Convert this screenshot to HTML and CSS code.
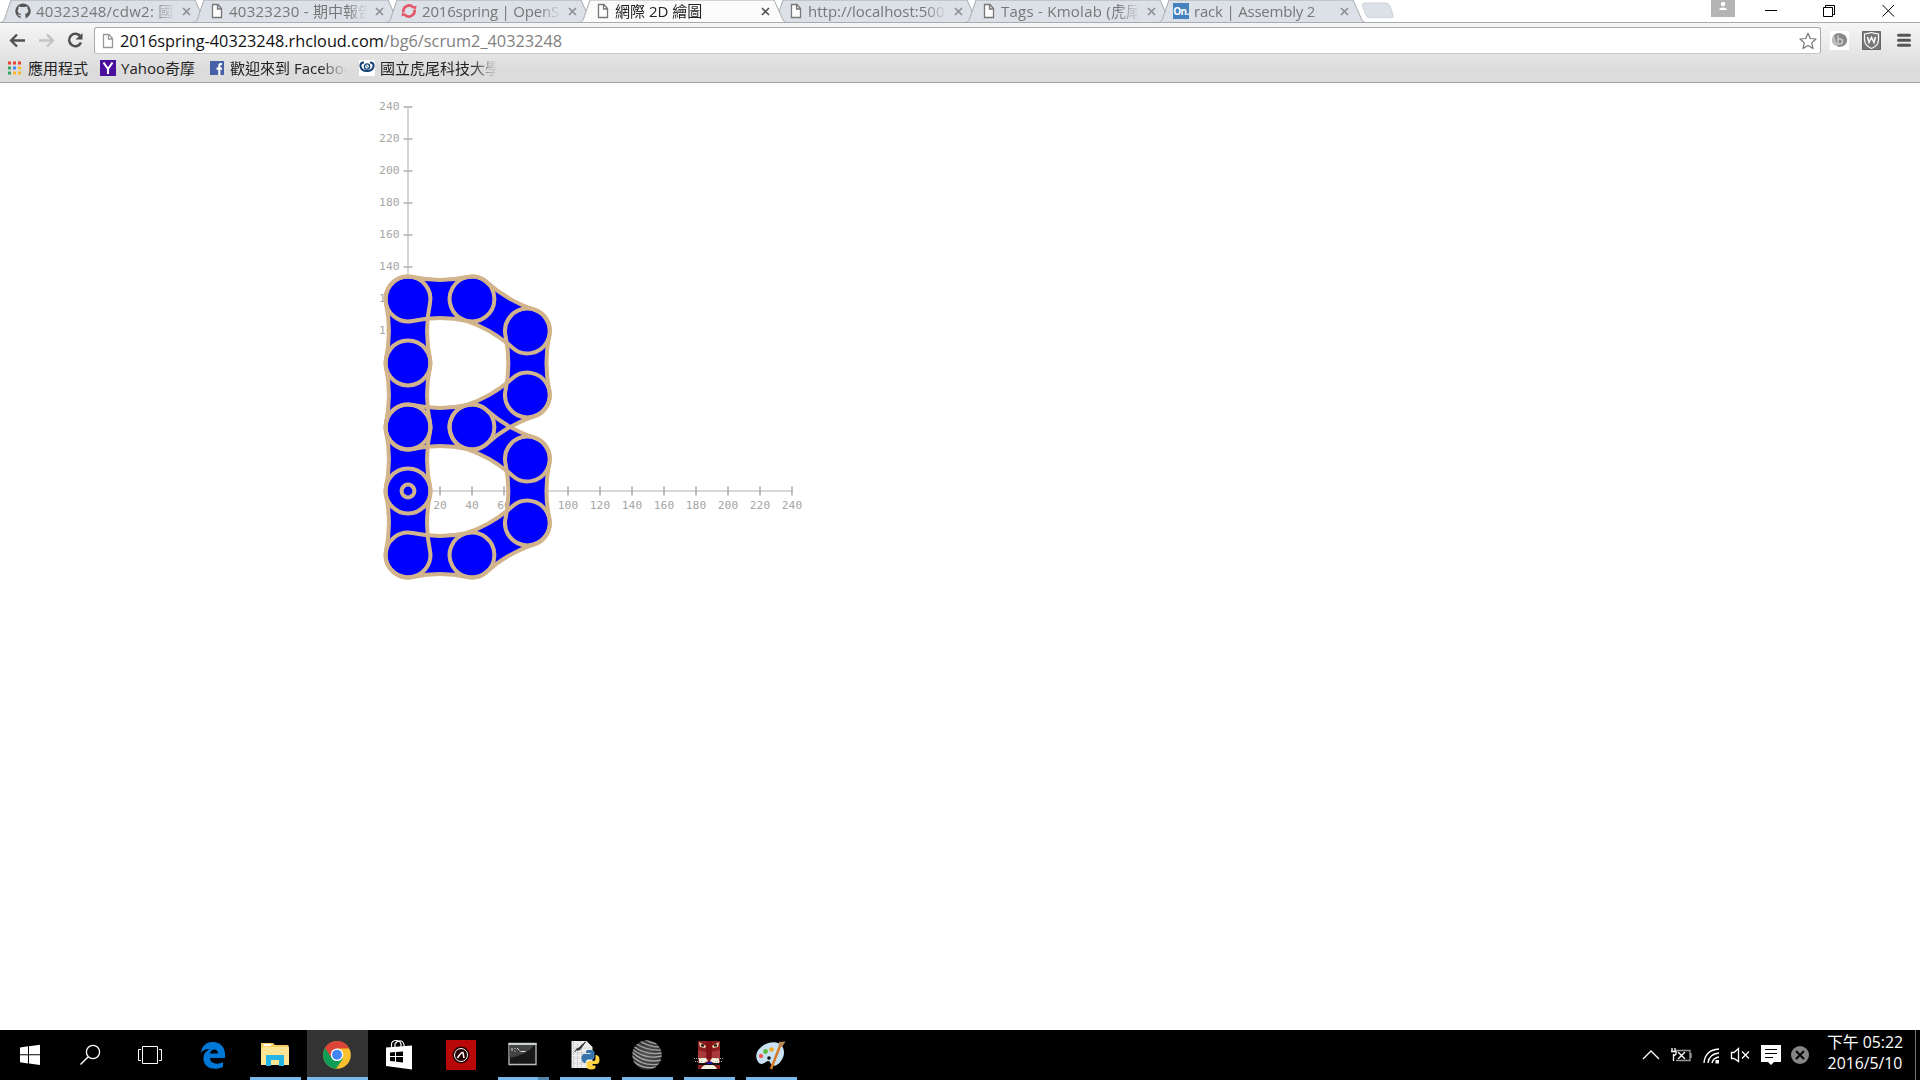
FILE: index.html
```html
<!DOCTYPE html>
<html lang="zh-Hant">
<head>
<meta charset="utf-8">
<title>網際 2D 繪圖</title>
<link rel="stylesheet" href="styles.css">
</head>
<body>
<svg class="defs" width="0" height="0">
  <defs>
    <symbol id="page" viewBox="0 0 12 16"><path d="M1.500 1.500H7L10.500 5.500V14.500H1.500ZM6.500 1.500V6H10.500" fill="#fff" stroke="currentColor" stroke-width="1.300"/></symbol>
    <symbol id="close" viewBox="0 0 9 9"><path d="M1 1L8 8M8 1L1 8" stroke="currentColor" stroke-width="1.700"/></symbol>
    <symbol id="tabshape" viewBox="0 0 211 23"><path d="M0 22.500C4 22 4.500 19 5.500 16L11 0H195L204 20C205 22 207 22.500 209 22.500Z"/></symbol>
    <path id="link" d="M4.580 -21.930A22.400 22.400 0 1 0 4.580 21.930A134 134 0 0 1 59.420 21.930A22.400 22.400 0 1 0 59.420 -21.930A134 134 0 0 1 4.580 -21.930Z"/>
    <g id="chain">
      <use href="#link" transform="translate(408 299)"/>
      <use href="#link" transform="translate(472 299) rotate(30)"/>
      <use href="#link" transform="translate(527.400 331) rotate(90)"/>
      <use href="#link" transform="translate(527.400 395) rotate(150)"/>
      <use href="#link" transform="translate(408 427)"/>
      <use href="#link" transform="translate(472 427) rotate(30)"/>
      <use href="#link" transform="translate(527.400 459) rotate(90)"/>
      <use href="#link" transform="translate(527.400 523) rotate(150)"/>
      <use href="#link" transform="translate(408 555)"/>
      <use href="#link" transform="translate(408 299) rotate(90)"/>
      <use href="#link" transform="translate(408 363) rotate(90)"/>
      <use href="#link" transform="translate(408 427) rotate(90)"/>
      <use href="#link" transform="translate(408 491) rotate(90)"/>
    </g>
  </defs>
</svg>

<header class="browser">
  <div class="tabstrip">
    <div class="tabs">
      <div class="tab"><svg class="shape"><use href="#tabshape"/></svg>
        <svg class="fav" viewBox="0 0 16 16"><path d="M8 0.500A7.600 7.600 0 0 0 5.500 15.300V12.800C3.500 13.200 3.200 12 2.300 11.300C3.500 11 3.800 12.300 5.500 11.900L6 10.900C2.500 10.400 2 7.500 3.500 5.400L3.600 3.200L5.700 4.100H10.300L12.400 3.200L12.500 5.400C14 7.500 13.500 10.400 10 10.900L10.500 12V15.300A7.600 7.600 0 0 0 8 0.500Z" fill="#555"/></svg>
        <span class="title"><span class="wide">40323248/cdw2: </span>國立</span><svg class="x"><use href="#close"/></svg></div>
      <div class="tab"><svg class="shape"><use href="#tabshape"/></svg>
        <svg class="fav pg"><use href="#page"/></svg><span class="title"><span class="wide">40323230 - </span>期中報告</span><svg class="x"><use href="#close"/></svg></div>
      <div class="tab"><svg class="shape"><use href="#tabshape"/></svg>
        <svg class="fav" viewBox="0 0 16 16"><g fill="none" stroke="#e45565" stroke-width="2.600"><path d="M2.500 9.500A5.800 5.800 0 0 1 12.500 4.500"/><path d="M13.500 6.500A5.800 5.800 0 0 1 3.500 11.500"/></g><path d="M10 5L15.500 2.500L15 6ZM6 11L0.500 13.500L1 10Z" fill="#e45565"/></svg>
        <span class="title tight">2016spring | OpenShift</span><svg class="x"><use href="#close"/></svg></div>
      <div class="tab active"><svg class="shape"><use href="#tabshape"/></svg>
        <svg class="fav pg"><use href="#page"/></svg><span class="title">網際 2D 繪圖</span><svg class="x"><use href="#close"/></svg></div>
      <div class="tab"><svg class="shape"><use href="#tabshape"/></svg>
        <svg class="fav pg"><use href="#page"/></svg><span class="title">http://localhost:5000</span><svg class="x"><use href="#close"/></svg></div>
      <div class="tab"><svg class="shape"><use href="#tabshape"/></svg>
        <svg class="fav pg"><use href="#page"/></svg><span class="title"><span class="wide">Tags - Kmolab (</span>虎尾</span><svg class="x"><use href="#close"/></svg></div>
      <div class="tab"><svg class="shape"><use href="#tabshape"/></svg>
        <span class="fav on">On.</span><span class="title tight">rack | Assembly 2</span><svg class="x"><use href="#close"/></svg></div>
      <svg class="newtab" viewBox="0 0 34 18"><path d="M4 3H24C27 3 28 4 29 6L32 15C32.500 17 31.500 18 30 18H10C7 18 6 17 5 15L1.500 6C1 4 2 3 4 3Z" fill="#dce0e7" stroke="#ccd0d5"/></svg>
    </div>
    <svg class="user" viewBox="0 0 24 17"><path d="M0 0H24V17H0Z" fill="#b4b4b4"/><circle cx="12" cy="4" r="2.200" fill="#fff"/><path d="M8 10C8 6.500 16 6.500 16 10Z" fill="#fff"/></svg>
    <svg class="winbtns" viewBox="0 0 174 22"><g fill="none" stroke="#000"><path d="M20 10.500H32"/><path d="M78.500 7.500H87.500V16.500H78.500ZM80.500 7V5.500H89.500V14.500H88"/><path d="M137.500 5L149 16.500M149 5L137.500 16.500"/></g></svg>
  </div>

  <div class="toolbar">
    <svg class="nav" viewBox="0 0 90 26"><g fill="none" stroke-width="2.300"><path d="M25 13.500H11.500M17 7.500L11 13.500L17 19.500" stroke="#505050"/><path d="M39 13.500H52.500M47 7.500L53 13.500L47 19.500" stroke="#c3c3c3"/><path d="M80.500 9.500A6.200 6.200 0 1 0 81 15.500" stroke="#505050" stroke-width="2.500"/></g><path d="M82.500 6V12.500H75.500Z" fill="#505050"/></svg>
    <div class="omnibox">
      <svg class="pg"><use href="#page"/></svg>
      <span class="url">2016spring-40323248.rhcloud.com<i>/bg6/scrum2_40323248</i></span>
      <svg class="star" viewBox="0 0 20 20"><path d="M10 2.200L12.300 7.500L18 8L13.700 11.900L15 17.600L10 14.600L5 17.600L6.300 11.900L2 8L7.700 7.500Z" fill="#fff" stroke="#777" stroke-width="1.200" stroke-linejoin="round"/></svg>
    </div>
    <svg class="ext" viewBox="0 0 99 26"><path d="M9 4H28V23H9Z" fill="#fff"/><ellipse cx="18.500" cy="13" rx="7.800" ry="6.800" fill="#bbb"/><path d="M13 8C17 4 25 7 25.800 12C26.500 18 21 20.500 17 19.500Z" fill="#888"/><path d="M17 8.500V17H19A2.500 2.500 0 0 0 19 12H17" fill="none" stroke="#ccc" stroke-width="1.500"/>
      <path d="M41.500 4.500H59.500V22.500H41.500Z" fill="#777" stroke="#666"/><path d="M43.500 7Q50.500 6 50.500 5Q50.500 6 57.500 7V13Q57 19 50.500 21.500Q44 19 43.500 13Z" fill="#777" stroke="#fff" stroke-width="1.200"/><path d="M46.500 10L48 15.500L50.500 10.500L53 15.500L54.500 10" stroke="#fff" stroke-width="1.500" fill="none"/>
      <path d="M77.500 8.200H88.500M77.500 13.200H88.500M77.500 18.200H88.500" stroke="#555" stroke-width="3" stroke-linecap="round"/></svg>
  </div>

  <nav class="bookmarks">
    <a class="b1"><svg viewBox="0 0 16 16"><path d="M2 1.500H5V4.500H2ZM7 1.500H10V4.500H7ZM12 1.500H15V4.500H12Z" fill="#ea4335"/><path d="M2 6.500H5V9.500H2Z" fill="#34a260"/><path d="M7 6.500H10V9.500H7Z" fill="#4285f4"/><path d="M12 6.500H15V9.500H12ZM12 11.500H15V14.500H12ZM7 11.500H10V14.500H7Z" fill="#fbb829"/><path d="M2 11.500H5V14.500H2Z" fill="#34a260"/></svg><span>應用程式</span></a>
    <a class="b2"><svg viewBox="0 0 16 16"><path d="M0 0H16V16H0Z" fill="#4b0f9e"/><path d="M3.500 2.500L8 9M12.500 2.500L8 9V14" stroke="#fff" stroke-width="2.100" fill="none"/></svg><span>Yahoo奇摩</span></a>
    <a class="b3"><svg viewBox="0 0 16 16"><path d="M1 1H15V15H1Z" fill="#4661a5"/><path d="M13 4H11.800Q10.300 4 10.300 5.500V15M7.500 8.600H13" stroke="#fff" stroke-width="2.100" fill="none"/></svg><span class="fade">歡迎來到 Facebook</span></a>
    <a class="b4"><svg viewBox="0 0 16 16"><path d="M0 0H16V16H0Z" fill="#fff"/><path d="M5 2.500Q1 2.500 1.500 6.500Q2.500 11 8 11Q13.500 11 14.500 6.500Q15 2.500 11 2.500" stroke="#123f73" stroke-width="2" fill="none"/><circle cx="8" cy="6.500" r="2.600" fill="none" stroke="#123f73" stroke-width="1.300"/><path d="M7 5.500L9 7.500" stroke="#123f73"/></svg><span class="fade">國立虎尾科技大學</span></a>
  </nav>
</header>

<main class="page">
  <svg class="plot" viewBox="0 83 1920 947">
    <g class="axis"><path d="M408 107V491H792"/></g>
    <g class="ticks"><path d="M403.500 107H412.500M403.500 139H412.500M403.500 171H412.500M403.500 203H412.500M403.500 235H412.500M403.500 267H412.500M403.500 299H412.500M403.500 331H412.500M440 486.500V495.500M472 486.500V495.500M504 486.500V495.500M536 486.500V495.500M568 486.500V495.500M600 486.500V495.500M632 486.500V495.500M664 486.500V495.500M696 486.500V495.500M728 486.500V495.500M760 486.500V495.500M792 486.500V495.500"/></g>
    <g class="labels ylab"><text x="399.500" y="110">240</text><text x="399.500" y="142">220</text><text x="399.500" y="174">200</text><text x="399.500" y="206">180</text><text x="399.500" y="238">160</text><text x="399.500" y="270">140</text><text x="399.500" y="302">120</text><text x="399.500" y="334">100</text></g>
    <g class="labels xlab"><text x="440" y="509">20</text><text x="472" y="509">40</text><text x="504" y="509">60</text><text x="568" y="509">100</text><text x="600" y="509">120</text><text x="632" y="509">140</text><text x="664" y="509">160</text><text x="696" y="509">180</text><text x="728" y="509">200</text><text x="760" y="509">220</text><text x="792" y="509">240</text></g>
    <use href="#chain" fill="#00f"/>
    <use href="#chain" fill="none" stroke="#d2b48c" stroke-width="4"/>
    <circle cx="408" cy="491" r="6.400" fill="none" stroke="#d2b48c" stroke-width="4"/>
  </svg>
</main>

<footer class="taskbar">
  <div class="apps">
    <svg class="app" viewBox="0 0 60 50"><path d="M20 17.500L28 16.300V24.300H20ZM29 16.200L40 14.800V24.300H29ZM20 25.300H28V33.500L20 32.300ZM29 25.300H40V35L29 33.600Z" fill="#fff"/></svg>
    <svg class="app" viewBox="0 0 60 50"><circle cx="33" cy="22" r="6.600" fill="none" stroke="#fff" stroke-width="1.300"/><path d="M28 27L20.500 34.500" stroke="#fff" stroke-width="1.500"/></svg>
    <svg class="app" viewBox="0 0 60 50"><path d="M22.500 16.500H37.500V33.500H22.500ZM21 19.500H18.500V30.500H21M39 19.500H41.500V30.500H39" fill="none" stroke="#fff"/></svg>
    <svg class="app w65" viewBox="0 0 65 50"><path d="M21 23C22 14 28 11.500 34 12C41 12.500 45 18 45 24V28H30C30 34 38 35 43 32V37C34 41 24 38 23.500 29.500C23 24 26 21 30 19C25 19 22.500 21 21 23ZM30 23.500H38C38 18 31 18 30 23.500Z" fill="#0078d7"/></svg>
    <svg class="app w62 run" viewBox="1 0 62 50"><path d="M17 13H29L31 15H44.500V35H17Z" fill="#f5cf5d"/><path d="M19 17H45V35H17V20Z" fill="#ffe594"/><path d="M19.500 14H27V16H19.500Z" fill="#fff"/><path d="M22 25H40V36H35V30H27V36H22Z" fill="#24b5e5"/></svg>
    <svg class="app w62 current" viewBox="0 0 62 50"><circle cx="30" cy="25" r="13.800" fill="#fbc02d"/><path d="M18 18A13.800 13.800 0 0 0 29 38.800L36 28.500L30 25H24Z" fill="#0f9d58"/><path d="M18 18A13.800 13.800 0 0 1 42.300 18.500H30L24 27Z" fill="#db4437"/><circle cx="30" cy="24.700" r="6.300" fill="#fff"/><circle cx="30" cy="24.700" r="5" fill="#4285f4"/></svg>
    <svg class="app w62" viewBox="1 0 62 50"><path d="M18 17.500L44 15.500V39.500L18 36Z" fill="#fff"/><path d="M23.500 20V14Q24 10.500 28 10.500Q32 10.500 33 14V19M27 20V14Q29 10.500 33 11Q36 11.500 36.500 18" fill="none" stroke="#fff" stroke-width="1.200"/><path d="M22 22.500L27 22V26H22ZM28 22L35 21.500V26H28ZM22 27H27V31.500L22 31ZM28 27H35V32.500L28 31.700Z" fill="#000"/></svg>
    <svg class="app w62" viewBox="1 0 62 50"><path d="M16 10H46V40H16Z" fill="#b90808"/><circle cx="31" cy="25" r="8.500" fill="#240000"/><circle cx="31" cy="25" r="6.500" fill="none" stroke="#fff"/><path d="M27.500 28Q31 22 33 22.500L34 28" fill="none" stroke="#fff" stroke-width="1.500"/></svg>
    <svg class="app w62 run multi" viewBox="1.500 0 62 50"><path d="M17.500 13.500H44.500V34.500H17.500Z" fill="#181818" stroke="#b9bec1" stroke-width="1.300"/><path d="M18 28V15H43Q35 25 18 28Z" fill="#444"/><path d="M17 13H45V15H17Z" fill="#ccd1d4"/><path d="M20.500 18V21M23.500 18V19M23.500 20.500V21.500M25.500 18L28 20.500M29 21.500H34" stroke="#ddd" fill="none"/></svg>
    <svg class="app w62 run" viewBox="1.500 0 62 50"><path d="M18 11H33L39 17V38H18Z" fill="#eee"/><path d="M20 12V38M24 14V37M28 14V37M20 18H38M20 23H36M20 28H36M20 33H36" stroke="#bbb" stroke-dasharray="1 1"/><path d="M23 20L32 12L26 20ZM21 22L24 18" fill="#333" stroke="#333"/><path d="M34 20H38Q41 20 41 23V27Q41 29.500 38 29.500H34Q32 30 32 33Q28 33 28 28Q28 24 31 24H37V23H32.500V21.500Q32.500 20 34 20Z" fill="#3675ac"/><path d="M42 25Q46 25 46 30Q46 34 43 34H38V35.500H42V37Q42 39.500 38 39.500Q33 39.500 33 36V33Q33 31 36 31H40Q42 31 42 28Z" fill="#ffd340"/></svg>
    <svg class="app w62 run" viewBox="1 0 62 50"><defs><radialGradient id="ball"><stop offset="0" stop-color="#555"/><stop offset="1" stop-color="#333"/></radialGradient><clipPath id="bc"><circle cx="31" cy="25" r="14.700"/></clipPath></defs><g clip-path="url(#bc)"><path d="M15 9H47V41H15Z" fill="url(#ball)"/><path d="M22 10Q33 17 43 17M19 13Q31 21 45 20M17 16Q30 26 46 23M16 19Q29 30 46 26M16 22Q28 34 46 30M16 26Q27 37 44 34M17 31Q27 40 41 37M28 9Q34 13 41 14" fill="none" stroke="#a5a5a5" stroke-width="1.300"/></g></svg>
    <svg class="app w62 run" viewBox="1 0 62 50"><path d="M20 11H42V39H20Z" fill="#8c1d20"/><path d="M20 20L28 22V32L20 30ZM42 20L34 22V32L42 30Z" fill="#a83a3c"/><path d="M28 11H34L33 29H29Z" fill="#7c1013"/><path d="M21 12L28 16L27 18L22 17ZM41 12L34 16L35 18L40 17Z" fill="#ecd5ad"/><path d="M23 15.500H26M36 15.500H39" stroke="#111" stroke-width="2"/><path d="M21 28H28L30 31L26 33H21ZM41 28H34L32 31L36 33H41ZM23 39Q25 34 31 34.500Q37 34 39 39Z" fill="#f2efdc"/><path d="M20 33H42V35H20Z" fill="#111"/><path d="M29 32H34V34H29Z" fill="#1717a8"/><path d="M16 28.500H24M38 28.500H46M17 31.500H25M37 31.500H45" stroke="#aaa" stroke-dasharray="1 1"/></svg>
    <svg class="app w62 run" viewBox="1 0 62 50"><path d="M17 30C13 20 26 11 36 12.500C45 14 46 25 41 31C36 38 31 36 30 32C28 29 25 34 21 34Q18 33 17 30Z" fill="#c9e2f3"/><circle cx="21" cy="26" r="2.200" fill="#ef5c50"/><circle cx="25.500" cy="21.500" r="2.400" fill="#5dba3b"/><circle cx="31.500" cy="19.500" r="2.300" fill="#f6a623"/><circle cx="29" cy="28" r="1.800" fill="#111"/><path d="M31 39L40 16" stroke="#d67a27" stroke-width="2.500"/><path d="M38.500 16L39 12L45.500 11.500L42 17Z" fill="#b98a5a"/></svg>
  </div>
  <svg class="tray" viewBox="0 0 180 50"><g fill="none" stroke="#fff" stroke-width="1.300"><path d="M3 29L11 21L19 29"/><path d="M36 20.500H50V30.500H36M51 23V28" stroke="#999"/><path d="M32 18V21M35 18V21M31 21.500H36V24Q33.500 27 33.500 24V31"/><path d="M38 22L45 29M45 22L38 29"/><path d="M64 33Q65 20 79 19"/><path d="M68 33Q69 24 79 23"/><path d="M72 33Q73 28 79 27"/><path d="M91.500 22.500H94L98.500 18.500V31.500L94 28.500H91.500Z"/><path d="M102 21.500L109 28.500M109 21.500L102 28.500"/></g><path d="M75.500 30H79V33.500H75.500Z" fill="#fff"/><path d="M121 15H141V32H134L131 35L128 32H121Z" fill="#fff"/><path d="M125 19.500H137M125 23.500H137M125 27.500H133" stroke="#000"/><circle cx="160" cy="25" r="9" fill="#858585"/><path d="M156 21L164 29M164 21L156 29" stroke="#000" stroke-width="2"/></svg>
  <div class="clock"><span>下午 05:22</span><span>2016/5/10</span></div>
  <div class="peek"></div>
</footer>
</body>
</html>
```
FILE: styles.css
```css
* { box-sizing: border-box; }
body {
  margin: 0;
  width: 1920px;
  height: 1080px;
  display: flex;
  flex-direction: column;
  overflow: hidden;
  background: #fff;
  font-family: "Open Sans", "Noto Sans", "Noto Sans CJK TC", sans-serif;
}
svg { display: block; flex: none; }
.defs { position: absolute; }
.browser { height: 83px; flex: none; display: flex; flex-direction: column; background: linear-gradient(#fff 0 22px, #f6f6f6 23px, #dcdcdc 70px); border-bottom: 1px solid #a0a0a0; }

.tabstrip { height: 23px; flex: none; display: flex; border-bottom: 1px solid #a8abae; }
.tabs { display: flex; flex: 1; }
.tab { position: relative; width: 193px; height: 23px; flex: none; display: flex; align-items: center; padding: 0 0 1px 15px; color: #777; font-size: 15px; }
.tab .shape { position: absolute; left: 0; top: 0; width: 211px; height: 23px; fill: #dce0e7; stroke: #a8abae; }
.tab > :not(.shape) { position: relative; }
.tab.active { color: #222; z-index: 1; }
.tab.active .shape { fill: #fbfbfb; }
.tab.active .x { color: #555; }
.fav { width: 16px; height: 16px; flex: none; }
.fav.pg { width: 12px; margin: 0 1px 0 3px; color: #777; }
.on { background: #4581bd; color: #fff; font-size: 10px; font-weight: 700; line-height: 16px; text-align: center; letter-spacing: -0.600px; }
.title { width: 137px; margin-left: 5px; line-height: 20px; padding-bottom: 1px; white-space: nowrap; overflow: hidden; -webkit-mask-image: linear-gradient(90deg, #000 117px, transparent 139px); mask-image: linear-gradient(90deg, #000 117px, transparent 139px); }
.wide { letter-spacing: 0.250px; }
.tight { letter-spacing: -0.200px; }
.x { width: 9px; height: 9px; margin-left: 9px; color: #8d8f92; }
.newtab { width: 34px; height: 18px; margin-left: 10px; }
.user { width: 24px; height: 17px; }
.winbtns { width: 174px; height: 22px; margin-left: 10px; margin-right: 1px; }

.toolbar { height: 35px; flex: none; display: flex; align-items: flex-start; padding-top: 4px; }
.nav { width: 90px; height: 26px; margin-right: 4px; }
.omnibox { width: 1727px; height: 27px; display: flex; align-items: center; padding: 0 2px 0 7px; background: #fff; border: 1px solid #a9a9a9; border-bottom-color: #c8c8c8; border-radius: 3px; }
.omnibox .pg { width: 12px; height: 16px; color: #999; }
.url { flex: 1; margin-left: 6px; font-size: 16.300px; color: #111; white-space: nowrap; }
.url i { font-style: normal; color: #808080; }
.star { width: 20px; height: 20px; }
.ext { width: 99px; height: 26px; }

.bookmarks { height: 20px; display: flex; align-items: center; font-size: 15px; color: #222; }
.bookmarks a { display: flex; align-items: center; flex: none; white-space: nowrap; line-height: 20px; }
.bookmarks svg { width: 16px; height: 16px; margin-right: 5px; }
.bookmarks span { overflow: hidden; }
.b1 { width: 94px; padding-left: 6px; }
.bookmarks .b1 svg { margin-right: 6px; }
.b2 { width: 110px; padding-left: 6px; }
.b3 { width: 149px; padding-left: 5px; }
.b4 { width: 149px; padding-left: 6px; }
.fade { width: 117px; -webkit-mask-image: linear-gradient(90deg, #000 90px, transparent); mask-image: linear-gradient(90deg, #000 90px, transparent); }

.page { flex: 1; }
.plot { width: 1920px; height: 947px; }
.axis path { fill: none; stroke: #ccc; stroke-width: 1.600; }
.ticks path { fill: none; stroke: #b0b0b0; stroke-width: 1.600; }
.labels { font: 11.300px "DejaVu Sans Mono", monospace; fill: #a6a6a6; }
.ylab { text-anchor: end; }
.xlab { text-anchor: middle; }

.taskbar { height: 50px; flex: none; display: flex; background: #000; color: #fff; }
.apps { flex: 1; display: flex; }
.app { width: 60px; height: 50px; }
.w65 { width: 65px; }
.w62 { width: 62px; }
.run { background: linear-gradient(#76b9ed, #76b9ed) 5px 100% / 51px 3px no-repeat; }
.current { background: linear-gradient(#76b9ed, #76b9ed) 0 100% / 61px 3px no-repeat, linear-gradient(#333, #333) 0 0 / 61px 50px no-repeat; }
.multi { background: linear-gradient(90deg, #76b9ed 40px, #5485ab 40px) 5px 100% / 51px 3px no-repeat; }
.tray { width: 180px; height: 50px; }
.clock { width: 93px; margin-left: 1px; display: flex; flex-direction: column; align-items: center; padding-top: 2px; font-size: 15.800px; line-height: 21px; }
.peek { width: 5px; border-left: 1px solid #777; margin-left: 1px; }
.clock span { margin-right: 5px; }
```
